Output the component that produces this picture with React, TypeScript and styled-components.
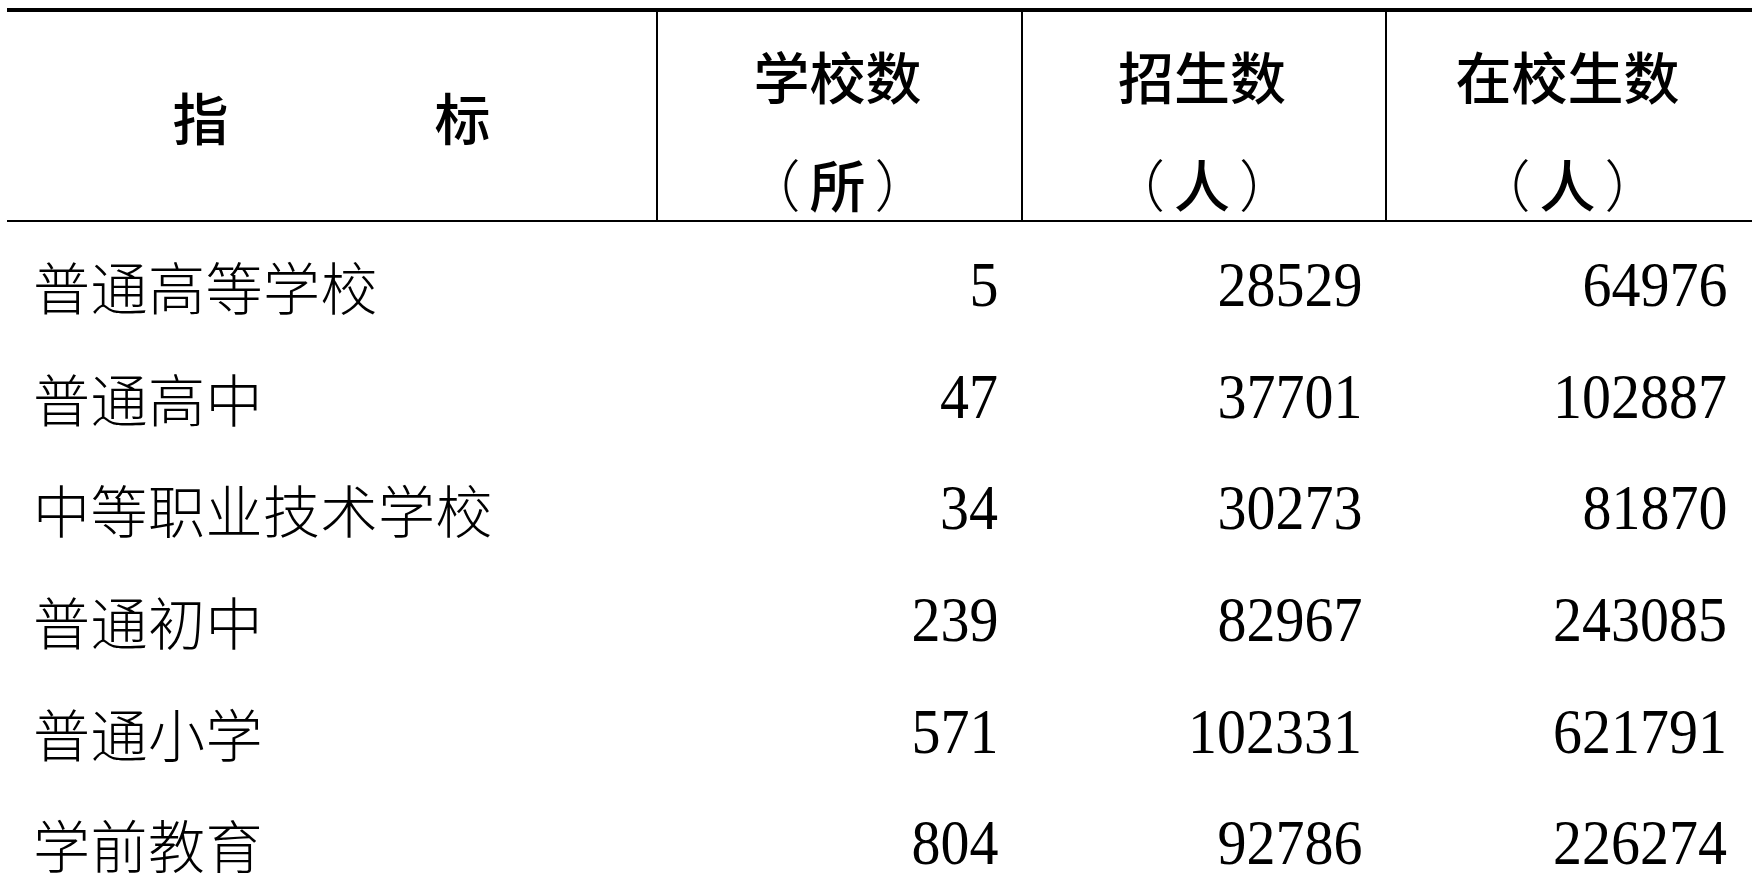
import React from "react";
import styled, { createGlobalStyle } from "styled-components";

const GlobalStyle = createGlobalStyle`
  html, body { margin: 0; padding: 0; background: #ffffff; }
  body { font-family: "Noto Sans CJK SC", "Noto Sans", sans-serif; color: #000; }
`;

const Page = styled.div`
  padding: 8px 0 0 7px;
  width: 1745px;
`;

const Grid = styled.div`
  display: grid;
  grid-template-columns: 651px 365px 364px 365px;
  border-top: 4px solid #000;
`;

const HeadCell = styled.div<{ $last?: boolean }>`
  height: 210px;
  border-bottom: 2px solid #000;
  border-right: ${(p) => (p.$last ? "none" : "2px solid #000")};
  font-family: "Noto Sans CJK SC", sans-serif;
  font-weight: 500;
  font-size: 56px;
  line-height: 56px;
  display: flex;
  flex-direction: column;
  align-items: center;
  box-sizing: border-box;
`;

const IndicatorHead = styled(HeadCell)`
  flex-direction: row;
  justify-content: center;
  gap: 206px;
`;

const StackHead = styled(HeadCell)`
  padding-top: 35px;
  gap: 52px;
  padding-right: 4px;
`;

const HeadLine = styled.span``;

const UnitLine = styled.span`
  letter-spacing: 9px;
  padding-left: 9px;
`;

const Paren = styled.span`
  font-weight: 300;
`;

const Body = styled.div`
  grid-column: 1 / -1;
  display: grid;
  grid-template-columns: 651px 365px 364px 365px;
  grid-auto-rows: 111.6px;
  padding-top: 8px;
`;

const NameCell = styled.div`
  display: flex;
  align-items: center;
  padding-left: 26px;
  font-family: "Noto Sans CJK SC", sans-serif;
  font-weight: 300;
  font-size: 57px;
  line-height: 1;
  letter-spacing: 0.5px;
`;

const NumCell = styled.div`
  display: flex;
  align-items: center;
  justify-content: flex-end;
  padding-right: 25px;
  font-family: "Liberation Serif", "Times New Roman", serif;
  font-size: 63px;
  line-height: 1.1;
`;

const Digits = styled.span`
  display: inline-block;
  transform: scaleX(0.92);
  transform-origin: right center;
`;

const rows: [string, number, number, number][] = [
  ["普通高等学校", 5, 28529, 64976],
  ["普通高中", 47, 37701, 102887],
  ["中等职业技术学校", 34, 30273, 81870],
  ["普通初中", 239, 82967, 243085],
  ["普通小学", 571, 102331, 621791],
  ["学前教育", 804, 92786, 226274],
];

function Unit({ text }: { text: string }) {
  return (
    <UnitLine>
      <Paren>（</Paren>
      {text}
      <Paren>）</Paren>
    </UnitLine>
  );
}

export default function App() {
  return (
    <>
      <GlobalStyle />
      <Page>
        <Grid>
          <IndicatorHead>
            <HeadLine>指</HeadLine>
            <HeadLine>标</HeadLine>
          </IndicatorHead>
          <StackHead>
            <HeadLine>学校数</HeadLine>
            <Unit text="所" />
          </StackHead>
          <StackHead>
            <HeadLine>招生数</HeadLine>
            <Unit text="人" />
          </StackHead>
          <StackHead $last>
            <HeadLine>在校生数</HeadLine>
            <Unit text="人" />
          </StackHead>
          <Body>
            {rows.map(([name, a, b, c]) => (
              <React.Fragment key={name}>
                <NameCell>{name}</NameCell>
                <NumCell><Digits>{a}</Digits></NumCell>
                <NumCell><Digits>{b}</Digits></NumCell>
                <NumCell><Digits>{c}</Digits></NumCell>
              </React.Fragment>
            ))}
          </Body>
        </Grid>
      </Page>
    </>
  );
}
